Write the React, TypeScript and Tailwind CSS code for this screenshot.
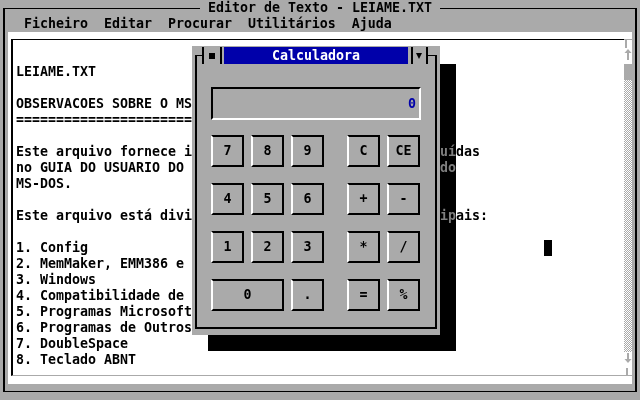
import React from "react";

// Each text row: the part at the left margin and, where the line runs on
// past the calculator, the tail that starts at column 55.
type EditorLine = { left: string; tail?: string };

const editorLines: EditorLine[] = [
  { left: "" },
  { left: "LEIAME.TXT" },
  { left: "" },
  { left: "OBSERVACOES SOBRE O MS" },
  { left: "======================" },
  { left: "" },
  { left: "Este arquivo fornece i", tail: "uídas" },
  { left: "no GUIA DO USUARIO DO", tail: "do" },
  { left: "MS-DOS." },
  { left: "" },
  { left: "Este arquivo está divi", tail: "ipais:" },
  { left: "" },
  { left: "1. Config" },
  { left: "2. MemMaker, EMM386 e" },
  { left: "3. Windows" },
  { left: "4. Compatibilidade de" },
  { left: "5. Programas Microsoft" },
  { left: "6. Programas de Outros" },
  { left: "7. DoubleSpace" },
  { left: "8. Teclado ABNT" },
];

const CURSOR_ROW = 12;

const keypad: string[][] = [
  ["7", "8", "9", "", "C", "CE"],
  ["4", "5", "6", "", "+", "-"],
  ["1", "2", "3", "", "*", "/"],
  ["0", ".", "", "=", "%"],
];

function Scrollbar() {
  return (
    <div className="flex w-2 flex-col">
      {/* top corner */}
      <div className="h-[9px] border-t border-[#aaaaaa]">
        <div className="ml-[1px] h-full w-[2px] bg-[#aaaaaa]" />
      </div>
      <svg width="8" height="16" viewBox="0 0 8 16" className="block">
        <polygon points="4,1 7.5,5 0.5,5" fill="#aaaaaa" />
        <rect x="3" y="3" width="2" height="9" fill="#aaaaaa" />
      </svg>
      <div className="h-4 bg-[#aaaaaa]" />
      <div className="flex-1 bg-[repeating-conic-gradient(#aaaaaa_0%_25%,#ffffff_0%_50%)] bg-size-[2px_2px]" />
      <svg width="8" height="16" viewBox="0 0 8 16" className="block">
        <rect x="3" y="1" width="2" height="8" fill="#aaaaaa" />
        <polygon points="0.5,7 7.5,7 4,11" fill="#aaaaaa" />
      </svg>
      {/* bottom corner */}
      <div className="h-[8px] border-b border-[#aaaaaa]">
        <div className="ml-[2px] h-full w-[2px] bg-[#aaaaaa]" />
      </div>
    </div>
  );
}

function CalcKey({ label, wide }: { label: string; wide?: boolean }) {
  return (
    <div
      className={`flex items-center justify-center border-2 border-t-black border-r-black border-b-black border-l-white ${
        wide ? "col-span-2" : ""
      }`}
    >
      {label}
    </div>
  );
}

function Calculator() {
  return (
    <div className="absolute left-[192px] top-[46px] w-[248px] bg-[#aaaaaa] px-[3px] pb-[6px] pt-[9px]">
      <div className="border-x-2 border-t border-b-2 border-black pb-4">
        {/* title bar sits over the frame's top line */}
        <div className="-mt-[9px] ml-[5px] flex h-[17px] w-[226px] items-center bg-[#aaaaaa]">
          <div className="h-full w-[2px] bg-black" />
          <div className="ml-[5px] h-[6px] w-[6px] bg-black" />
          <div className="ml-[5px] h-full w-[2px] bg-black" />
          <div className="ml-[2px] flex h-full w-[184px] items-center justify-center bg-[#0000aa] text-white">
            Calculadora
          </div>
          <div className="ml-[3px] h-full w-[2px] bg-black" />
          <svg width="6" height="6" viewBox="0 0 6 6" className="ml-[3px] block">
            <polygon points="0,0 6,0 3,6" fill="#000000" />
          </svg>
          <div className="ml-[4px] h-full w-[2px] bg-black" />
        </div>

        {/* display */}
        <div className="ml-[14px] mt-[23px] flex h-[33px] w-[210px] items-center justify-end border-2 border-t-black border-l-black border-b-white border-r-white pr-[3px] text-[#0000aa]">
          0
        </div>

        {/* keypad */}
        <div className="ml-[14px] mt-[15px] grid grid-cols-[33px_33px_33px_9px_33px_33px] auto-rows-[32px] gap-x-[7px] gap-y-4">
          {keypad.map((row, r) =>
            row.map((k, c) => {
              if (k === "") return <div key={`${r}-${c}`} />;
              return <CalcKey key={`${r}-${c}`} label={k} wide={r === 3 && k === "0"} />;
            })
          )}
        </div>
      </div>
    </div>
  );
}

export default function App() {
  return (
    <div className="relative h-[400px] w-[640px] overflow-hidden bg-[#aaaaaa] font-['DejaVu_Sans_Mono','Liberation_Mono',monospace] text-[13.29px] font-bold leading-4 text-black">
      {/* editor window frame */}
      <div className="ml-[3px] mt-2 flex h-[384px] w-[634px] flex-col border-x-2 border-y border-black">
        <div className="-mt-[9px] flex h-4 justify-center">
          <span className="whitespace-pre bg-[#aaaaaa] px-2">Editor de Texto - LEIAME.TXT</span>
        </div>
        <div className="h-4 whitespace-pre pl-[19px]">Ficheiro  Editar  Procurar  Utilitários  Ajuda</div>

        {/* text area */}
        <div className="mx-[3px] h-[352px] bg-white pb-2 pl-[3px] pt-[7px]">
          <div className="flex h-full">
            <div className="flex-1 border-b border-l-2 border-t border-b-[#aaaaaa] border-l-black border-t-black pb-[7px] pl-[3px] pt-2">
              {editorLines.map((line, i) => (
                <div key={i} className="grid h-4 grid-cols-[424px_auto] whitespace-pre">
                  <span>{line.left}</span>
                  {line.tail && <span>{line.tail}</span>}
                  {i === CURSOR_ROW && (
                    <span className="col-start-2 ml-[104px] h-4 w-2 bg-black" />
                  )}
                </div>
              ))}
            </div>
            <Scrollbar />
          </div>
        </div>
      </div>

      {/* drop shadow of the calculator: darkens what lies beneath */}
      <div className="absolute left-[208px] top-[64px] h-[287px] w-[248px] [backdrop-filter:invert(1)_brightness(0.5)]" />
      <Calculator />
    </div>
  );
}
